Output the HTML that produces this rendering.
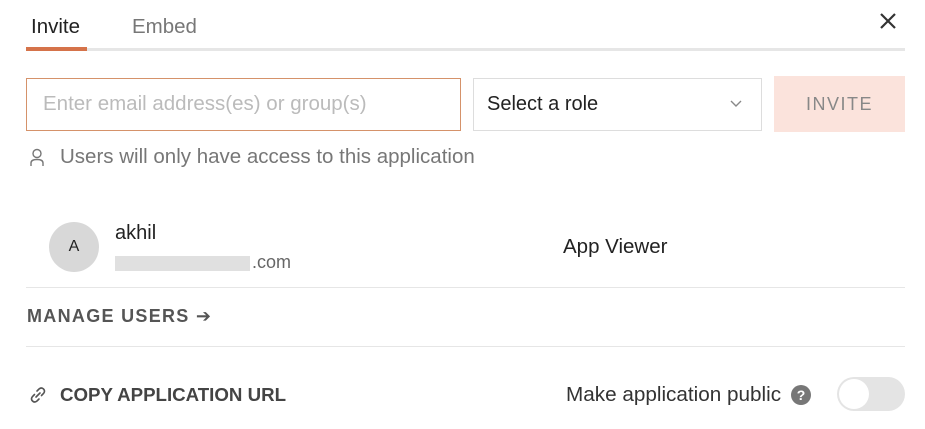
<!DOCTYPE html>
<html><head><style>
*{box-sizing:border-box;margin:0;padding:0}
body{width:925px;height:429px;background:#fff;font-family:"Liberation Sans",sans-serif;position:relative;overflow:hidden;color:#222}
.a{position:absolute;white-space:nowrap}
</style></head><body>
<div class="a" style="left:31px;top:15px;font-size:20.5px;color:#222">Invite</div>
<div class="a" style="left:132px;top:15px;font-size:20.5px;color:#777">Embed</div>
<div class="a" style="left:26px;top:48px;width:879px;height:3px;background:#e6e6e6"></div>
<div class="a" style="left:26px;top:47px;width:61px;height:4px;background:#d5734a"></div>
<svg class="a" style="left:878px;top:11px" width="20" height="20" viewBox="0 0 20 20"><path d="M3 3L17 17M17 3L3 17" stroke="#333" stroke-width="2.2"/></svg>
<div class="a" style="left:26px;top:78px;width:435px;height:53px;border:1.5px solid #d5926a"></div>
<div class="a" style="left:43px;top:92px;font-size:20.5px;color:#bbb">Enter email address(es) or group(s)</div>
<div class="a" style="left:473px;top:78px;width:289px;height:53px;border:1px solid #ddd"></div>
<div class="a" style="left:487px;top:93px;font-size:20px;color:#222">Select a role</div>
<svg class="a" style="left:729px;top:99px" width="14" height="10" viewBox="0 0 14 10"><path d="M2 2L7 7L12 2" stroke="#888" stroke-width="1.4" fill="none"/></svg>
<div class="a" style="left:774px;top:76px;width:131px;height:56px;background:#fbe3dc"></div>
<div class="a" style="left:774px;top:94px;width:131px;text-align:center;font-size:18px;letter-spacing:1.5px;color:#888">INVITE</div>
<svg class="a" style="left:29px;top:148px" width="16" height="19" viewBox="0 0 16 19"><circle cx="8" cy="5.5" r="4" stroke="#777" stroke-width="1.4" fill="none"/><path d="M2 18V15Q2 11.5 8 11.5Q14 11.5 14 15V18" stroke="#777" stroke-width="1.4" fill="none"/></svg>
<div class="a" style="left:60px;top:145px;font-size:20.5px;color:#777">Users will only have access to this application</div>
<div class="a" style="left:49px;top:222px;width:50px;height:50px;border-radius:50%;background:#d8d8d8;text-align:center;line-height:50px;font-size:16px;color:#222">A</div>
<div class="a" style="left:115px;top:222px;font-size:20px;color:#222">akhil</div>
<div class="a" style="left:115px;top:256px;width:135px;height:15px;background:#e0e0e0"></div>
<div class="a" style="left:252px;top:252px;font-size:18px;color:#666">.com</div>
<div class="a" style="left:563px;top:235px;font-size:20.5px;color:#222">App Viewer</div>
<div class="a" style="left:26px;top:287px;width:879px;height:1px;background:#e6e6e6"></div>
<div class="a" style="left:27px;top:306px;font-size:18px;letter-spacing:1.3px;color:#555;font-weight:bold">MANAGE USERS <span style="font-weight:normal">➔</span></div>
<div class="a" style="left:26px;top:346px;width:879px;height:1px;background:#e6e6e6"></div>
<svg class="a" style="left:28px;top:385px" width="20" height="20" viewBox="0 0 20 20"><path d="M8 12L12 8M9 6L11 4Q13.5 2 15.5 4Q17.5 6 15.5 8.5L13.5 10.5M11 14L9 16Q6.5 18 4.5 16Q2.5 14 4.5 11.5L6.5 9.5" stroke="#555" stroke-width="1.6" fill="none" stroke-linecap="round"/></svg>
<div class="a" style="left:60px;top:384px;font-size:18.7px;color:#444;font-weight:bold">COPY APPLICATION URL</div>
<div class="a" style="left:566px;top:383px;font-size:20.7px;color:#333">Make application public</div>
<div class="a" style="left:791px;top:385px;width:20px;height:20px;border-radius:50%;background:#777;color:#fff;font-size:14px;font-weight:bold;text-align:center;line-height:20px">?</div>
<div class="a" style="left:837px;top:377px;width:68px;height:34px;border-radius:17px;background:#e4e4e4"></div>
<div class="a" style="left:839px;top:379px;width:30px;height:30px;border-radius:50%;background:#fff"></div>
</body></html>
